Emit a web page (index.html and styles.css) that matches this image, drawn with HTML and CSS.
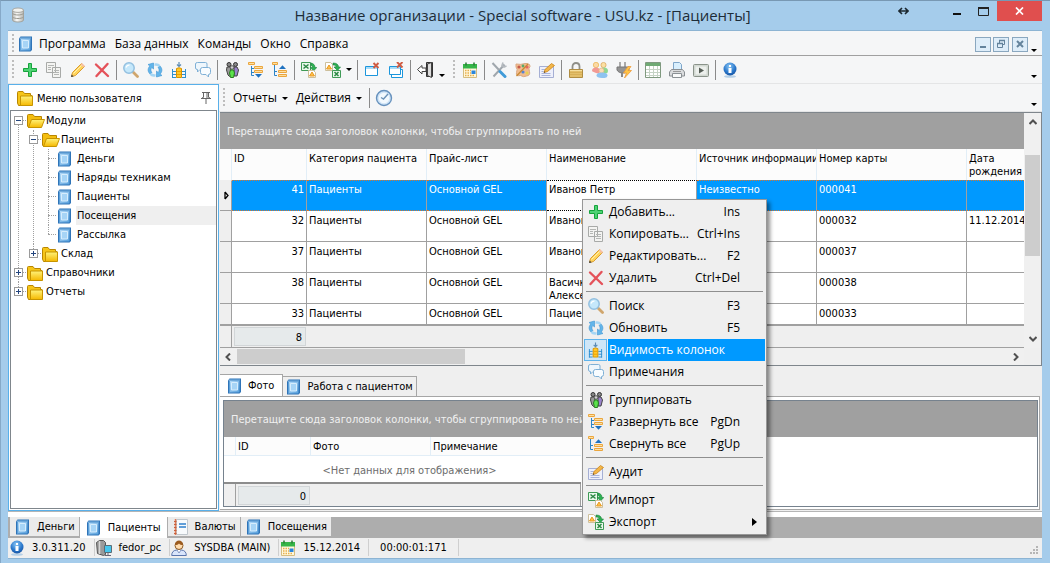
FILE: index.html
```html
<!DOCTYPE html>
<html lang="ru">
<head>
<meta charset="utf-8">
<title>Название организации - Special software - USU.kz - [Пациенты]</title>
<link rel="stylesheet" href="styles.css">
</head>
<body>
<svg class="sprite" width="0" height="0" aria-hidden="true">
  <defs>
    <linearGradient id="g-blue" x1="0" y1="0" x2="1" y2="1"><stop offset="0" stop-color="#b9defa"/><stop offset="1" stop-color="#559edb"/></linearGradient>
    <linearGradient id="g-gold" x1="0" y1="0" x2="0" y2="1"><stop offset="0" stop-color="#fff27a"/><stop offset="1" stop-color="#f5b800"/></linearGradient>
    <linearGradient id="g-grey" x1="0" y1="0" x2="1" y2="0"><stop offset="0" stop-color="#b5b5b0"/><stop offset=".4" stop-color="#fafaf8"/><stop offset="1" stop-color="#b5b5b0"/></linearGradient>
    <radialGradient id="g-ball" cx=".45" cy=".3" r=".75"><stop offset="0" stop-color="#8cc8f5"/><stop offset=".6" stop-color="#2a78cc"/><stop offset="1" stop-color="#174f9c"/></radialGradient>
  </defs>
  <symbol id="i-book" viewBox="0 0 16 16"><path d="M1 2.500L2.500.500H14v13.500L12.500 15.500H1z" fill="#2f74b8"/><path d="M2 2.500h10.500v12H2z" fill="url(#g-blue)"/><path d="M4.500 4.500h6v7.500h-6z" fill="#a6d4f6" stroke="#d6edfd"/><path d="M2 2h11" stroke="#7db6e4"/><path d="M2.500 3v11" stroke="#5b9fd8"/></symbol>
  <symbol id="i-db" viewBox="0 0 16 16"><path d="M2.500 3v10c0 1.200 2.500 2 5.500 2s5.500-.8 5.500-2V3z" fill="url(#g-grey)" stroke="#a3a39d"/><ellipse cx="8" cy="3.200" rx="5.500" ry="2.200" fill="#f2f2ee" stroke="#aaa9a3"/><path d="M2.500 6.500c2 2 9 2 11 0M2.500 10c2 2 9 2 11 0" fill="none" stroke="#99988f"/></symbol>
  <symbol id="i-add" viewBox="0 0 16 16"><path d="M6.500 1.500h3v5h5v3h-5v5h-3v-5h-5v-3h5z" fill="#4ed274" stroke="#16a33c" stroke-linejoin="round"/></symbol>
  <symbol id="i-copy" viewBox="0 0 16 16"><path d="M.5.500h9v10h-9zM6.500 5.500h8v10h-8z" fill="#f4f4f2" stroke="#a8aaa8"/><path d="M2 3.500h6M2 5.500h3M2 7.500h3M8 8.500h5M8 10.500h5M8 12.500h5" stroke="#b4b6b4"/></symbol>
  <symbol id="i-edit" viewBox="0 0 16 16"><path d="M1.500 14.500l1-4L11.500 1.500l3 3-9 9z" fill="#ffd45c" stroke="#d99c30"/><path d="M3.500 11.500l8.500-8.500" stroke="#fff1b0"/><path d="M10.500 2.500l1.500-1.500 3 3-1.500 1.500z" fill="#f6bfa0"/><path d="M1 15l.6-2.500 2 2z" fill="#444"/></symbol>
  <symbol id="i-del" viewBox="0 0 16 16"><path d="M2 2.500L14 14M13.500 2L2.500 14" stroke="#e4525a" stroke-width="2.400" stroke-linecap="round"/></symbol>
  <symbol id="i-search" viewBox="0 0 16 16"><path d="M10 10l4.500 4.500" stroke="#d0a66d" stroke-width="2.800" stroke-linecap="round"/><circle cx="6" cy="6" r="5.200" fill="#c5e8fb" stroke="#93c0e0" stroke-width="1.500"/><path d="M3 5.500c.5-1.500 2-2.500 3.500-2.300" stroke="#fff" fill="none" stroke-width="1.300"/></symbol>
  <symbol id="i-refresh" viewBox="0 0 16 16"><path d="M1 2.500L6.500 1v6L4.800 5.500C3.500 7 3.500 9 5 10.500L3 12C.5 9.500.5 6.500 2.800 4z" fill="#62b5ea" stroke="#3d94d3" stroke-width=".6"/><path d="M15 13.500L9.500 15V9l1.700 1.500C12.500 9 12.500 7 11 5.500L13 4c2.500 2.500 2.500 5.500.2 8z" fill="#62b5ea" stroke="#3d94d3" stroke-width=".6"/><path d="M7.500 1.500C10 .8 12 1.500 13.500 3.500L11.500 5c-1-1-2.500-1.500-4-1zM8.500 14.500C6 15.200 4 14.500 2.500 12.500l2-1.500c1 1 2.500 1.500 4 1z" fill="#a5d6f4"/></symbol>
  <symbol id="i-cols" viewBox="0 0 16 16"><path d="M8 0v4M6 2.500l2 2 2-2" fill="none" stroke="#5b8bb5" stroke-width="1.200"/><path d="M1.500 7v9M14.500 7v9M1 9.500h4M1 12.500h4M1 15.500h4M11 9.500h4M11 12.500h4M11 15.500h4" stroke="#2f8fcf"/><path d="M5.500 6.500q2.500-1.500 5 0v9h-5z" fill="#ffc928" stroke="#d79200"/><path d="M6 9.500h4M6 12.500h4" stroke="#f09d00"/></symbol>
  <symbol id="i-chat" viewBox="0 0 16 16"><path d="M2.500.500h8q1.500 0 1.500 1.500v4q0 1.500-1.500 1.500H5L2.500 10V7.500Q.5 7.500.5 6V2Q.5.500 2.500.500z" fill="#eef6fc" stroke="#7fb0d6"/><path d="M7.500 5.500h6q2 0 2 2v3q0 2-2 2v2.500l-2.500-2.500H7.500q-2 0-2-2v-3q0-2 2-2z" fill="#f8fcff" stroke="#7fb0d6"/></symbol>
  <symbol id="i-group" viewBox="0 0 16 16"><circle cx="5" cy="2.500" r="2" fill="#888" stroke="#333"/><circle cx="11.500" cy="2.500" r="2" fill="#888" stroke="#333"/><path d="M3 5h3.500l1 8-2 1.500L4 13 2.500 8z" fill="#999" stroke="#444"/><path d="M10 5h3l1.500 3-1.500 6h-3z" fill="#9a83cc" stroke="#444"/><circle cx="8" cy="5.500" r="1.800" fill="#d0d0d0" stroke="#555"/><path d="M6.500 8h3l1 3-1 4.500h-3L5.500 11z" fill="#5be24b" stroke="#2b7b23"/></symbol>
  <symbol id="i-expand" viewBox="0 0 16 16"><path d="M3.500 4v9.500H6M3.500 6.500H6M3.500 10.500H6" fill="none" stroke="#2d84c6"/><path d="M.5.500h6v2h-6zM6.500 4.500h8v2h-8zM6.500 8.500h8v2h-8z" fill="#ffe0a0" stroke="#eaa63f"/><path d="M7 12h7l-3.500 3.800z" fill="#1f72c0"/></symbol>
  <symbol id="i-collapse" viewBox="0 0 16 16"><path d="M2.500 3v10.500H5M2.500 9.500H5" fill="none" stroke="#2d84c6"/><path d="M.5.500h5v2h-5zM6.500 8.500h8v2h-8zM6.500 12.500h8v2h-8z" fill="#ffe0a0" stroke="#eaa63f"/><path d="M7 7h7l-3.500-3.800z" fill="#1f72c0"/></symbol>
  <symbol id="i-import" viewBox="0 0 16 16"><path d="M.5.500h9v8h-9z" fill="#e9f8ec" stroke="#3f9a56"/><path d="M2.500 2.500l5 4M7.500 2.500l-5 4" stroke="#2b8743" stroke-width="1.500"/><path d="M10 1c2.500.5 4 2 4 4.500h1.800L12.500 9 9.500 5.500h2c0-1.200-.5-1.700-1.500-2z" fill="#2db052" stroke="#17803a" stroke-width=".6"/><path d="M7.500 8.500h5l2 2v5h-7z" fill="#fff" stroke="#cdbf9c"/><path d="M8.500 14l2.500-4 2.500 4z" fill="#ffc04a" stroke="#e89a22"/></symbol>
  <symbol id="i-export" viewBox="0 0 16 16"><path d="M.5.500h5l2 2v6h-7z" fill="#fff" stroke="#cdbf9c"/><path d="M1.500 7L4 3l2.500 4z" fill="#ffc04a" stroke="#e89a22"/><path d="M8 1c3.500 0 5.500 1.500 5.500 4h2L12.500 8.500 9 5h2c0-1.500-1-2-3-2z" fill="#2db052" stroke="#17803a" stroke-width=".6"/><path d="M7.500 8.500h8v7h-8z" fill="#e9f8ec" stroke="#3f9a56"/><path d="M9.500 10l4 4M13.500 10l-4 4" stroke="#2b8743" stroke-width="1.500"/></symbol>
  <symbol id="i-winx" viewBox="0 0 16 16"><path d="M1.500 4.500h12v9h-12z" fill="#fff" stroke="#1c96dc"/><path d="M2 6h11" stroke="#a9dcf8" stroke-width="2"/><path d="M9.500 1l5 5M14.500 1l-5 5" stroke="#cf5b42" stroke-width="1.900"/></symbol>
  <symbol id="i-winsx" viewBox="0 0 16 16"><path d="M3.500 8v7.500h11V7.500h-2" fill="#fff" stroke="#1c96dc"/><path d="M1.500 4.500h11v8h-11z" fill="#fff" stroke="#1c96dc"/><path d="M2 6h10" stroke="#a9dcf8" stroke-width="2"/><path d="M9 0l5.500 5.500M14.500 0L9 5.500" stroke="#cf5b42" stroke-width="1.900"/></symbol>
  <symbol id="i-exit" viewBox="0 0 16 16"><path d="M9.500.500h6v14h-6z" fill="#999" stroke="#333"/><path d="M10.500 2l4-1.500v15l-4-2z" fill="#ddd" stroke="#444"/><path d="M.5 7.500L5 3.500v2.500h4v3.500H5V12z" fill="#fff" stroke="#444"/></symbol>
  <symbol id="i-cal" viewBox="0 0 16 16"><path d="M1.500 2.500h13v13h-13z" fill="#fff8dc" stroke="#d5bd80"/><path d="M1 2h14v4.500H1z" fill="#35b548"/><path d="M4 .5v3M12 .5v3" stroke="#2b7b37" stroke-width="1.500"/><path d="M3 8.500h6M3 11h6M3 13.500h10" stroke="#e7ae4e" stroke-width="1.500" stroke-dasharray="1.500 1"/><path d="M9.500 8.500h4v3.500h-4z" fill="#2a86dd"/></symbol>
  <symbol id="i-tools" viewBox="0 0 16 16"><path d="M1.500 1l7 7.500M13.500 2.500l-11 12" stroke="#a0a7ad" stroke-width="2"/><path d="M12 .5l-1 3 2 1.500 2.500-1" stroke="#b5babf" stroke-width="1.600" fill="none"/><path d="M9 9.500l5 5" stroke="#419bd8" stroke-width="3" stroke-linecap="round"/></symbol>
  <symbol id="i-palette" viewBox="0 0 16 16"><path d="M1 2q5 1 9-.5 5-.5 5 3-2 2-.5 5 1 4-3 4.500-3 1.500-6-.5-5 1-4-3Q3 7 1 5z" fill="#f2bd90" stroke="#dba880"/><circle cx="4" cy="5" r="1.600" fill="#c55a47"/><circle cx="8" cy="4" r="1.400" fill="#58ab6b"/><circle cx="12" cy="5" r="1.600" fill="#e86464"/><circle cx="8" cy="10" r="1.600" fill="#5584d6"/><circle cx="12" cy="11" r="1.500" fill="#e6d250"/><path d="M1.500 14L13 2" stroke="#c78a35" stroke-width="1.300"/></symbol>
  <symbol id="i-audit" viewBox="0 0 16 16"><path d="M.5 4.500h14v11H.5z" fill="#eef0fb" stroke="#a5afd4"/><path d="M2.500 7.500h4M2.500 9.500h2M2.500 11.500h9M2.500 13.500h9" stroke="#a9b4da"/><path d="M5 10.500l1-3L12.500 1.500l3 2-7 6z" fill="#f3b649" stroke="#c98418" stroke-width=".8"/><path d="M4.800 10.700l1.500-.5-1-1z" fill="#333"/></symbol>
  <symbol id="i-lock" viewBox="0 0 16 16"><path d="M4.500 8V4.500C4.500 2.500 6 1 8 1s3.500 1.500 3.500 3.500V8" fill="none" stroke="#8f8f88" stroke-width="1.800"/><path d="M1.500 7.500h13v8h-13z" fill="#e3bf6b" stroke="#b08d42"/><path d="M2 8.500h12" stroke="#f5dfa0"/><path d="M2 10.500h12M2 12.500h12" stroke="#d2a94f" stroke-width=".7"/></symbol>
  <symbol id="i-users" viewBox="0 0 16 16"><circle cx="4" cy="3" r="2.700" fill="#fbd9a4" stroke="#e8b34e" stroke-width=".7"/><path d="M0 9q0-3.500 4-3.500T8 9t-4 2-4-2z" fill="#f19a94"/><circle cx="11.500" cy="3" r="2.600" fill="#fbe0a4" stroke="#d9a052" stroke-width=".7"/><path d="M8 8q0-2.500 4-2.500T16 9t-4 2-4-3z" fill="#90d891"/><circle cx="9.500" cy="8.500" r="2.500" fill="#fbdcb4" stroke="#e2b482" stroke-width=".7"/><path d="M4.500 13.500q0-3 5.500-3t5.500 3-5.500 2.500-5.500-2.500z" fill="#8ec3f0"/></symbol>
  <symbol id="i-plug" viewBox="0 0 16 16"><path d="M4 0v5M9 0v5" stroke="#aaa" stroke-width="2"/><path d="M1 5h12v3c-1 2-3 3-6 3S2 10 1 8z" fill="#949494" stroke="#777"/><path d="M6 11v4" stroke="#888" stroke-width="2"/><path d="M12 4.500L7.500 11h3l-2 5 7-7.500H12l3-4z" fill="#ffc545" stroke="#ef9a3a" stroke-width=".8"/></symbol>
  <symbol id="i-table" viewBox="0 0 16 16"><path d="M.5.500h15v15H.5z" fill="#fff" stroke="#7f997f"/><path d="M1 1h14v3H1z" fill="#6faa74"/><path d="M1 7.500h14M1 10.500h14M1 13.500h14M4.500 4v11M8.500 4v11M12.500 4v11" stroke="#c5d3c5"/></symbol>
  <symbol id="i-print" viewBox="0 0 16 16"><path d="M4.500.5h6l2 2v6h-8z" fill="#d9effd" stroke="#7fa6c9"/><path d="M2.500 7.500h11l2 2.500v4H.5v-4z" fill="#dadcde" stroke="#8a8f93"/><path d="M3.500 11.500h9v4h-9z" fill="#f9fafa" stroke="#8b9195"/><path d="M4 9.500h8" stroke="#999"/></symbol>
  <symbol id="i-play" viewBox="0 0 16 16"><rect x=".5" y="2.500" width="15" height="12" rx="1" fill="#d2d8d2" stroke="#8a938a"/><path d="M2.500 4.500h11v8h-11z" fill="#edf0ed"/><path d="M6 5.500v6l5-3z" fill="#555d56"/></symbol>
  <symbol id="i-info" viewBox="0 0 16 16"><ellipse cx="8" cy="14.500" rx="6" ry="1.300" fill="#b5cfe6"/><circle cx="8" cy="7" r="6.500" fill="url(#g-ball)"/><path d="M7 3h2v2H7zM6.500 6h3v5h-3z" fill="#fff"/></symbol>
  <symbol id="i-clock" viewBox="0 0 18 18"><circle cx="9" cy="9" r="7.500" fill="#cfe4f7" stroke="#6691bd" stroke-width="1.400"/><circle cx="9" cy="9" r="5.300" fill="#f2f9fe"/><path d="M13 5L8.500 10 6 8.500" fill="none" stroke="#6c93b8" stroke-width="1.400"/></symbol>
  <symbol id="i-folder" viewBox="0 0 16 16"><path d="M.5 2.500q0-1 1-1H6l1.500 2h6v2H15v9L3 15.500H1.500L.5 13z" fill="#f6c518" stroke="#b98600"/><path d="M3.500 6h12v9.500h-12z" fill="url(#g-gold)" stroke="#c79400"/></symbol>
  <symbol id="i-folder-open" viewBox="0 0 18 16"><path d="M.5 2.500q0-1 1-1H6l1.500 2h7v3L13 14.500H1.500L.5 13z" fill="#f4be10" stroke="#b98600"/><path d="M4.500 6.500h13L14.500 14.500H1.500z" fill="url(#g-gold)" stroke="#c79400"/></symbol>
  <symbol id="i-pin" viewBox="0 0 12 14"><path d="M2 1.500h8M3.500 2v4.500M8.500 2v4.500M7 2v5M1 7.500h10M3.500 6L1.500 7.500M8.500 6l2 1.500M6 8v5" stroke="#666" fill="none"/></symbol>
  <symbol id="i-ruled" viewBox="0 0 16 16"><path d="M3.500.500h11v15h-11z" fill="#f7fafc" stroke="#c0c7cd"/><path d="M2.500 0v16" stroke="#e07a55" stroke-width="1.500"/><path d="M1 2.500h2.500M1 5.500h2.500M1 8.500h2.500M1 11.500h2.500M1 14.500h2.500" stroke="#c8603c"/><path d="M6 5h7M6 8h7" stroke="#2f80cc" stroke-width="1.500"/></symbol>
  <symbol id="i-server" viewBox="0 0 16 16"><path d="M.5 2.500l3-2h4l2 2v12l-2 1-6-2z" fill="#9a9a9a" stroke="#555"/><path d="M3.500 1v13" stroke="#d5d5d5" stroke-width="1.500"/><path d="M8.500 5.500h7v7h-7z" fill="#45c5ec" stroke="#5b6d77"/><path d="M12 13v2M9 15.500h6" stroke="#667"/></symbol>
  <symbol id="i-user" viewBox="0 0 16 16"><path d="M.7 15.500q0-5 5-5.500h4.600q5 .5 5 5.500z" fill="#d9e5fb" stroke="#5c76ad"/><circle cx="8" cy="5.500" r="4" fill="#ffdcae" stroke="#8d5b25"/><path d="M4 5c0-6 8-6 8 0-2 0-3-.5-4-1.500C7 4.500 6 5 4 5z" fill="#9b5b1f"/><path d="M6 10l2 3 2-3" fill="#fff" stroke="#5c76ad" stroke-width=".7"/></symbol>
  <symbol id="i-down" viewBox="0 0 6 3"><path d="M0 0h6L3 3z" fill="#000"/></symbol>
  <symbol id="i-right" viewBox="0 0 5 8"><path d="M0 0v8l5-4z" fill="#000"/></symbol>
  <symbol id="i-chev" viewBox="0 0 8 8"><path d="M6 .500L2.500 4 6 7.500" fill="none" stroke="#505050" stroke-width="2"/></symbol>
</svg>

<div class="window">
  <header class="titlebar">
    <svg class="ic title-icon"><use href="#i-db"/></svg>
    <h1 class="title">Название организации - Special software - USU.kz - [Пациенты]</h1>
    <div class="win-buttons">
      <button class="win-btn wide" aria-label="Растянуть"><svg width="11" height="8" viewBox="0 0 11 8"><path d="M1 4h9M4 1L1 4l3 3M7 1l3 3-3 3" fill="none" stroke="#1c2830" stroke-width="1.600"/></svg></button>
      <button class="win-btn" aria-label="Свернуть"><svg width="10" height="10" viewBox="0 0 10 10"><path d="M1 8h8" stroke="#111" stroke-width="2"/></svg></button>
      <button class="win-btn" aria-label="Развернуть"><svg width="11" height="9" viewBox="0 0 11 9"><path d="M.5 1h10v7.500H.5z" fill="none" stroke="#222"/><path d="M0 1h11" stroke="#222" stroke-width="2"/></svg></button>
      <button class="win-btn close" aria-label="Закрыть"><svg width="9" height="8" viewBox="0 0 9 8"><path d="M1 .5l7 7M8 .5l-7 7" stroke="#fff" stroke-width="1.700"/></svg></button>
    </div>
  </header>

  <div class="client">
    <nav class="menubar" aria-label="Главное меню">
      <span class="grip"></span>
      <svg class="ic book"><use href="#i-book"/></svg>
      <button class="menu-btn">Программа</button>
      <button class="menu-btn">База данных</button>
      <button class="menu-btn">Команды</button>
      <button class="menu-btn">Окно</button>
      <button class="menu-btn">Справка</button>
      <div class="mdi-buttons">
        <button class="mdi-btn" aria-label="Свернуть окно"><svg width="10" height="10" viewBox="0 0 10 10"><path d="M2 8h6" stroke="#64839c" stroke-width="2"/></svg></button>
        <button class="mdi-btn" aria-label="Восстановить окно"><svg width="10" height="10" viewBox="0 0 10 10"><path d="M3.500 4V1.500h5v4H6.500M1.500 4.500h5v4h-5z" fill="none" stroke="#64839c"/><path d="M3 1.500h6M1 4.500h6" stroke="#64839c" stroke-width="1.600"/></svg></button>
        <button class="mdi-btn gap" aria-label="Закрыть окно"><svg width="10" height="10" viewBox="0 0 10 10"><path d="M2 2l6 6M8 2L2 8" stroke="#64839c" stroke-width="2"/></svg></button>
      </div>
      <button class="more" aria-label="Ещё"><svg><use href="#i-down"/></svg></button>
    </nav>

    <div class="toolbar" role="toolbar" aria-label="Команды">
      <span class="grip"></span>
      <button class="tool" aria-label="Добавить"><svg class="ic"><use href="#i-add"/></svg></button>
      <button class="tool" aria-label="Копировать"><svg class="ic"><use href="#i-copy"/></svg></button>
      <button class="tool" aria-label="Редактировать"><svg class="ic"><use href="#i-edit"/></svg></button>
      <button class="tool" aria-label="Удалить"><svg class="ic"><use href="#i-del"/></svg></button>
      <span class="sep"></span>
      <button class="tool" aria-label="Поиск"><svg class="ic"><use href="#i-search"/></svg></button>
      <button class="tool" aria-label="Обновить"><svg class="ic"><use href="#i-refresh"/></svg></button>
      <button class="tool" aria-label="Видимость колонок"><svg class="ic"><use href="#i-cols"/></svg></button>
      <button class="tool" aria-label="Примечания"><svg class="ic"><use href="#i-chat"/></svg></button>
      <span class="sep"></span>
      <button class="tool" aria-label="Группировать"><svg class="ic"><use href="#i-group"/></svg></button>
      <button class="tool" aria-label="Развернуть все"><svg class="ic"><use href="#i-expand"/></svg></button>
      <button class="tool" aria-label="Свернуть все"><svg class="ic"><use href="#i-collapse"/></svg></button>
      <span class="sep"></span>
      <button class="tool" aria-label="Импорт"><svg class="ic"><use href="#i-import"/></svg></button>
      <button class="tool" aria-label="Экспорт"><svg class="ic"><use href="#i-export"/></svg></button>
      <button class="drop" aria-label="Варианты экспорта"><svg><use href="#i-down"/></svg></button>
      <span class="sep"></span>
      <button class="tool" aria-label="Закрыть вкладку"><svg class="ic"><use href="#i-winx"/></svg></button>
      <button class="tool" aria-label="Закрыть все вкладки"><svg class="ic"><use href="#i-winsx"/></svg></button>
      <span class="sep"></span>
      <button class="tool" aria-label="Выход"><svg class="ic"><use href="#i-exit"/></svg></button>
      <button class="drop low" aria-label="Ещё команды"><svg><use href="#i-down"/></svg></button>
      <span class="grip inner"></span>
      <button class="tool" aria-label="Календарь"><svg class="ic"><use href="#i-cal"/></svg></button>
      <span class="sep"></span>
      <button class="tool" aria-label="Настройки"><svg class="ic"><use href="#i-tools"/></svg></button>
      <button class="tool" aria-label="Оформление"><svg class="ic"><use href="#i-palette"/></svg></button>
      <button class="tool" aria-label="Аудит"><svg class="ic"><use href="#i-audit"/></svg></button>
      <span class="sep"></span>
      <button class="tool" aria-label="Блокировка"><svg class="ic"><use href="#i-lock"/></svg></button>
      <button class="tool" aria-label="Пользователи"><svg class="ic"><use href="#i-users"/></svg></button>
      <button class="tool" aria-label="Подключение"><svg class="ic"><use href="#i-plug"/></svg></button>
      <span class="sep"></span>
      <button class="tool" aria-label="Таблица"><svg class="ic"><use href="#i-table"/></svg></button>
      <button class="tool" aria-label="Печать"><svg class="ic"><use href="#i-print"/></svg></button>
      <button class="tool" aria-label="Запуск"><svg class="ic"><use href="#i-play"/></svg></button>
      <span class="sep"></span>
      <button class="tool" aria-label="О программе"><svg class="ic"><use href="#i-info"/></svg></button>
      <button class="more" aria-label="Ещё"><svg><use href="#i-down"/></svg></button>
    </div>

    <div class="workspace">
      <aside class="side">
        <div class="side-head">
          <svg class="ic"><use href="#i-folder"/></svg>
          <h2 class="side-title">Меню пользователя</h2>
          <button class="pin" aria-label="Закрепить"><svg><use href="#i-pin"/></svg></button>
        </div>
        <ul class="tree">
          <li class="node"><div class="row"><button class="toggle minus" aria-label="Свернуть Модули"></button><svg class="ic open"><use href="#i-folder-open"/></svg><span>Модули</span></div>
            <ul>
              <li class="node"><div class="row"><button class="toggle minus" aria-label="Свернуть Пациенты"></button><svg class="ic open"><use href="#i-folder-open"/></svg><span>Пациенты</span></div>
                <ul>
                  <li class="node leaf"><a class="row" href="#money"><svg class="ic"><use href="#i-book"/></svg><span>Деньги</span></a></li>
                  <li class="node leaf"><a class="row" href="#orders"><svg class="ic"><use href="#i-book"/></svg><span>Наряды техникам</span></a></li>
                  <li class="node leaf"><a class="row" href="#patients"><svg class="ic"><use href="#i-book"/></svg><span>Пациенты</span></a></li>
                  <li class="node leaf"><a class="row selected" href="#visits"><svg class="ic"><use href="#i-book"/></svg><span>Посещения</span></a></li>
                  <li class="node leaf"><a class="row" href="#mailing"><svg class="ic"><use href="#i-book"/></svg><span>Рассылка</span></a></li>
                </ul>
              </li>
              <li class="node"><div class="row"><button class="toggle plus" aria-label="Развернуть Склад"></button><svg class="ic"><use href="#i-folder"/></svg><span>Склад</span></div></li>
            </ul>
          </li>
          <li class="node"><div class="row"><button class="toggle plus" aria-label="Развернуть Справочники"></button><svg class="ic"><use href="#i-folder"/></svg><span>Справочники</span></div></li>
          <li class="node"><div class="row"><button class="toggle plus" aria-label="Развернуть Отчеты"></button><svg class="ic"><use href="#i-folder"/></svg><span>Отчеты</span></div></li>
        </ul>
      </aside>

      <main class="doc">
        <div class="toolbar sub" role="toolbar" aria-label="Отчеты и действия">
          <span class="grip"></span>
          <button class="menu-btn">Отчеты <svg><use href="#i-down"/></svg></button>
          <button class="menu-btn">Действия <svg><use href="#i-down"/></svg></button>
          <span class="sep"></span>
          <button class="tool" aria-label="Время"><svg class="ic clock"><use href="#i-clock"/></svg></button>
          <button class="more" aria-label="Ещё"><svg><use href="#i-down"/></svg></button>
        </div>

        <section class="grid">
          <div class="grid-view">
            <div class="group-bar">Перетащите сюда заголовок колонки, чтобы сгруппировать по ней</div>
            <table class="data">
              <colgroup><col class="c-mark"><col class="c-id"><col class="c-mid"><col class="c-mid"><col class="c-big"><col class="c-mid"><col class="c-big"><col></colgroup>
              <thead><tr><th></th><th>ID</th><th>Категория пациента</th><th>Прайс-лист</th><th>Наименование</th><th>Источник информации</th><th>Номер карты</th><th>Дата рождения</th></tr></thead>
              <tbody>
                <tr class="current"><td class="mark"><svg width="5" height="9" viewBox="0 0 5 9"><path d="M1 1v7M1 1l3 3.500L1 8" fill="none" stroke="#000" stroke-width="1.300"/></svg></td><td class="num">41</td><td>Пациенты</td><td>Основной GEL</td><td class="focus">Иванов Петр</td><td>Неизвестно</td><td>000041</td><td></td></tr>
                <tr><td class="mark"></td><td class="num">32</td><td>Пациенты</td><td>Основной GEL</td><td>Иванов</td><td></td><td>000032</td><td>11.12.2014</td></tr>
                <tr><td class="mark"></td><td class="num">37</td><td>Пациенты</td><td>Основной GEL</td><td>Иванов</td><td></td><td>000037</td><td></td></tr>
                <tr><td class="mark"></td><td class="num">38</td><td>Пациенты</td><td>Основной GEL</td><td>Васичкин<br>Алексей</td><td></td><td>000038</td><td></td></tr>
                <tr class="last"><td class="mark"></td><td class="num">33</td><td>Пациенты</td><td>Основной GEL</td><td>Пациент</td><td></td><td>000033</td><td></td></tr>
              </tbody>
              <tfoot><tr><td class="mark"></td><td><div class="total">8</div></td><td colspan="6"></td></tr></tfoot>
            </table>
          </div>
          <div class="vscroll" role="presentation"><svg class="chev up"><use href="#i-chev"/></svg><div class="thumb"></div><svg class="chev dn"><use href="#i-chev"/></svg></div>
          <div class="hscroll" role="presentation"><svg class="chev"><use href="#i-chev"/></svg><div class="thumb"></div><svg class="chev rt"><use href="#i-chev"/></svg></div>
        </section>

        <section class="detail">
          <div class="tabs" role="tablist">
            <button class="tab active" role="tab" aria-selected="true"><svg class="ic"><use href="#i-book"/></svg>Фото</button>
            <button class="tab" role="tab" aria-selected="false"><svg class="ic"><use href="#i-book"/></svg>Работа с пациентом</button>
          </div>
          <div class="tab-page">
            <div class="detail-grid">
              <div class="group-bar">Перетащите сюда заголовок колонки, чтобы сгруппировать по ней</div>
              <table class="data small">
                <colgroup><col class="c-mark"><col class="c-id"><col class="c-mid"><col class="c-big"></colgroup>
                <thead><tr><th></th><th>ID</th><th>Фото</th><th>Примечание</th></tr></thead>
                <tbody><tr><td></td><td class="empty" colspan="3">&lt;Нет данных для отображения&gt;</td></tr></tbody>
                <tfoot><tr><td class="mark"></td><td><div class="total">0</div></td><td colspan="2"></td></tr></tfoot>
              </table>
            </div>
          </div>
        </section>
      </main>
    </div>

    <div class="doc-tabs" role="tablist">
      <button class="doc-tab" role="tab"><svg class="ic"><use href="#i-book"/></svg>Деньги</button>
      <button class="doc-tab active" role="tab" aria-selected="true"><svg class="ic"><use href="#i-book"/></svg>Пациенты</button>
      <button class="doc-tab" role="tab"><svg class="ic"><use href="#i-ruled"/></svg>Валюты</button>
      <button class="doc-tab" role="tab"><svg class="ic"><use href="#i-book"/></svg>Посещения</button>
    </div>

    <footer class="status">
      <span class="cell"><svg class="ic"><use href="#i-info"/></svg>3.0.311.20</span>
      <span class="cell"><svg class="ic"><use href="#i-server"/></svg>fedor_pc</span>
      <span class="cell"><svg class="ic"><use href="#i-user"/></svg>SYSDBA (MAIN)</span>
      <span class="cell"><svg class="ic"><use href="#i-cal"/></svg>15.12.2014</span>
      <span class="cell plain">00:00:01:171</span>
      <svg class="resize" width="9" height="9" viewBox="0 0 9 9"><path d="M6 0h2v2H6zM3 3h2v2H3zM6 3h2v2H6zM0 6h2v2H0zM3 6h2v2H3zM6 6h2v2H6z" fill="#b5b5b5"/></svg>
    </footer>
  </div>

  <div class="context" role="menu">
    <button class="item" role="menuitem"><svg class="ic"><use href="#i-add"/></svg><span>Добавить...</span><kbd>Ins</kbd></button>
    <button class="item" role="menuitem"><svg class="ic"><use href="#i-copy"/></svg><span>Копировать...</span><kbd>Ctrl+Ins</kbd></button>
    <button class="item" role="menuitem"><svg class="ic"><use href="#i-edit"/></svg><span>Редактировать...</span><kbd>F2</kbd></button>
    <button class="item" role="menuitem"><svg class="ic"><use href="#i-del"/></svg><span>Удалить</span><kbd>Ctrl+Del</kbd></button>
    <hr>
    <button class="item" role="menuitem"><svg class="ic"><use href="#i-search"/></svg><span>Поиск</span><kbd>F3</kbd></button>
    <button class="item" role="menuitem"><svg class="ic"><use href="#i-refresh"/></svg><span>Обновить</span><kbd>F5</kbd></button>
    <button class="item hot" role="menuitem"><svg class="ic"><use href="#i-cols"/></svg><span>Видимость колонок</span></button>
    <button class="item" role="menuitem"><svg class="ic"><use href="#i-chat"/></svg><span>Примечания</span></button>
    <hr>
    <button class="item" role="menuitem"><svg class="ic"><use href="#i-group"/></svg><span>Группировать</span></button>
    <button class="item" role="menuitem"><svg class="ic"><use href="#i-expand"/></svg><span>Развернуть все</span><kbd>PgDn</kbd></button>
    <button class="item" role="menuitem"><svg class="ic"><use href="#i-collapse"/></svg><span>Свернуть все</span><kbd>PgUp</kbd></button>
    <hr>
    <button class="item" role="menuitem"><svg class="ic"><use href="#i-audit"/></svg><span>Аудит</span></button>
    <hr>
    <button class="item" role="menuitem"><svg class="ic"><use href="#i-import"/></svg><span>Импорт</span></button>
    <button class="item" role="menuitem"><svg class="ic"><use href="#i-export"/></svg><span>Экспорт</span><svg class="sub-arrow"><use href="#i-right"/></svg></button>
  </div>
</div>
</body>
</html>
```

FILE: styles.css
```css
* { box-sizing: border-box; }

body {
  margin: 0;
  font: 11px/13px "DejaVu Sans Condensed", "DejaVu Sans", sans-serif;
  color: #000;
  background: #a5cceb;
}

button {
  margin: 0;
  padding: 0;
  border: 0;
  background: none;
  color: inherit;
  font: inherit;
  display: flex;
  align-items: center;
}

h1, h2 { margin: 0; font-weight: normal; }
ul { margin: 0; padding: 0; list-style: none; }
a { color: inherit; text-decoration: none; }

.sprite { position: absolute; }
.ic { width: 16px; height: 16px; flex: none; }

.window {
  position: relative;
  min-height: 100vh;
  display: flex;
  flex-direction: column;
  padding: 0 8px 6px 7px;
  border-top: 1px solid #7898b3;
  border-left: 1px solid #86a9c8;
  background: #a5cceb;
}

/* Title bar */
.titlebar { display: flex; height: 29px; }
.title-icon { margin: 6px 0 0 2px; }
.title {
  flex: 1;
  padding: 4px 0 0 134px;
  text-align: center;
  font: 15px/20px "Open Sans", "Noto Sans", sans-serif;
  color: #1d2c38;
}
.win-buttons { display: flex; align-items: flex-start; }
.win-btn { width: 27px; height: 20px; justify-content: center; }
.win-btn.wide { width: 36px; margin-right: 22px; }
.win-btn.close { width: 45px; background: #e04f4e; }

/* Client area */
.client {
  flex: 1;
  display: flex;
  flex-direction: column;
  border: 1px solid #8db4d3;
  border-width: 1px 0;
  background: #f5f6f7;
}

.grip {
  width: 2px;
  height: 20px;
  margin: 0 4px;
  background: repeating-linear-gradient(#bdbdbd 0 2px, transparent 2px 4px);
  flex: none;
}
.more, .drop { width: 10px; height: 20px; justify-content: center; }
.more { margin: 0 3px 0 auto; align-items: flex-end; padding-bottom: 2px; }
.more svg, .drop svg, .menu-btn svg { width: 6px; height: 3px; }
.drop { width: 8px; margin: 0 2px 0 0; }
.drop.low { align-items: flex-end; width: 10px; margin: 0; padding-bottom: 3px; }

.menubar {
  display: flex;
  align-items: center;
  height: 25px;
  padding-top: 2px;
  border-bottom: 1px solid #a0a0a0;
}
.book { margin: 0 5px 0 0; }
.menu-btn { font: 12px/16px "Open Sans", "Noto Sans", sans-serif; margin-right: 9px; gap: 5px; }
.mdi-buttons { display: flex; gap: 2px; margin-left: auto; }
.mdi-btn {
  width: 16px;
  height: 15px;
  justify-content: center;
  border: 1px solid #8aa7bf;
  background: #deedf9;
}
.mdi-btn.gap { margin-left: 1px; }
.mdi-buttons + .more { margin-left: 1px; }

.toolbar {
  display: flex;
  align-items: center;
  height: 28px;
  border-bottom: 1px solid #e4e5e6;
}
.tool { width: 24px; height: 24px; justify-content: center; }
.sep { width: 1px; height: 20px; margin: 0 2px; background: #8a8a8a; flex: none; }
.toolbar .inner { margin: 0 3px 0 6px; }

.workspace { flex: 1; display: flex; }

/* Side panel */
.side {
  width: 211px;
  flex: none;
  display: flex;
  flex-direction: column;
  border: 1px solid #59b0ea;
  padding: 1px;
  background: #fff;
}
.side-head {
  display: flex;
  align-items: center;
  height: 24px;
  padding: 0 5px 0 7px;
  gap: 4px;
}
.side-title { flex: 1; font-size: 11px; }
.pin svg { width: 12px; height: 14px; }
.tree { flex: 1; border: 1px solid #7f868c; background: #fff; }

.node { position: relative; }
.node .row { display: flex; align-items: center; height: 19px; padding-left: 3px; gap: 3px; }
.node .ic.open { width: 18px; margin-right: -2px; }
.node ul { margin-left: 15px; }
.toggle {
  position: relative;
  z-index: 1;
  width: 9px;
  height: 9px;
  margin-right: 1px;
  border: 1px solid #9a9a9a;
}
.toggle.minus {
  background: linear-gradient(#23457e, #23457e) 50% 50% / 5px 1px no-repeat #fff;
}
.toggle.plus {
  background:
    linear-gradient(#23457e, #23457e) 50% 50% / 5px 1px no-repeat,
    linear-gradient(#23457e, #23457e) 50% 50% / 1px 5px no-repeat #fff;
}
.node::before {
  content: "";
  position: absolute;
  left: 7px;
  top: 0;
  height: 100%;
  border-left: 1px dotted #a0a0a0;
}
.node:last-child::before { height: 9px; }
.tree > .node:first-child::before { top: 9px; }
.node::after {
  content: "";
  position: absolute;
  left: 7px;
  top: 9px;
  width: 8px;
  border-top: 1px dotted #a0a0a0;
}
.leaf .row { padding-left: 16px; }
.node .row span { flex: 1; line-height: 19px; }
.leaf .row span { padding-left: 1px; }
.selected span { background: #efefef; }

/* Document area */
.doc { flex: 1; min-width: 0; display: flex; flex-direction: column; background: #efefef; }
.sub { height: 28px; padding-top: 1px; background: #f5f6f7; }
.sub .grip { margin-right: 8px; }
.sub .menu-btn { margin-right: 8px; }
.sub .menu-btn + .sep { margin-left: -1px; }
.sub .clock { width: 18px; height: 18px; }

.grid {
  display: grid;
  grid-template: auto 17px / minmax(0, 1fr) 17px;
  border: 1px solid #7f868c;
  border-width: 1px 1px 1px 0;
  margin-left: 1px;
  background: #efefef;
}
.grid-view { overflow: hidden; }
.group-bar {
  height: 36px;
  padding: 12px 7px 11px;
  background: #a0a0a0;
  color: #f0f0f0;
  white-space: nowrap;
  overflow: hidden;
}

.data { width: 100%; table-layout: fixed; border-collapse: separate; border-spacing: 0; background: #fff; }
.c-mark { width: 12px; }
.c-id { width: 75px; }
.c-mid { width: 120px; }
.c-big { width: 150px; }
.data th {
  height: 31px;
  padding: 3px 0 0 2px;
  border-right: 1px solid #e2eef7;
  background: #fcfcfc;
  font-weight: normal;
  text-align: left;
  vertical-align: top;
}
.data th:not(:nth-child(2)):not(:nth-child(8)) { white-space: nowrap; overflow: hidden; }
.data td {
  height: 31px;
  padding: 3px 0 0 2px;
  border-right: 1px solid #a0a0a0;
  border-bottom: 1px solid #a0a0a0;
  vertical-align: top;
}
.data td:last-child, .data th:last-child { border-right: 0; }
.data .num { text-align: right; padding-right: 2px; }
.data .mark { background: #efefef; vertical-align: middle; padding: 0 4px; }
.data .mark svg { display: block; }
.current td { background: #0099ff; color: #fff; border-top: 1px dotted #d9762b; border-bottom: 1px dotted #d9762b; padding-top: 2px; }
.current .mark { border-top-color: #efefef; border-bottom: 1px solid #a0a0a0; }
.data .focus { background: #fff; color: #000; border-top: 1px dotted #000; border-bottom: 1px dotted #000; }
.data .last td { height: 22px; border-bottom: 2px solid #a0a0a0; }
.data tfoot td { height: 22px; padding: 1px; border-bottom: 1px solid #a0a0a0; background: #efefef; vertical-align: middle; border-right: 0; }
.data tfoot .mark { border-right: 1px solid #a0a0a0; }
.total {
  height: 19px;
  margin-left: 1px;
  padding: 3px 3px 0;
  border: 1px solid #d2d6d8;
  background: #e6eaeb;
  text-align: right;
}

.vscroll { display: flex; flex-direction: column; align-items: center; padding: 5px 0; background: #f0f0f0; }
.vscroll .thumb { width: 15px; height: 101px; margin-top: 29px; background: #cdcdcd; }
.chev { width: 8px; height: 8px; flex: none; }
.chev.up { transform: rotate(90deg); }
.chev.dn { transform: rotate(-90deg); margin-top: auto; }
.chev.rt { transform: rotate(180deg); margin-left: auto; }
.hscroll { display: flex; align-items: center; padding: 0 4px; background: #f0f0f0; }
.hscroll .thumb { width: 228px; height: 15px; margin-left: 5px; background: #cdcdcd; }

/* Detail tabs */
.detail { flex: 1; display: flex; flex-direction: column; padding: 8px 2px 1px 1px; }
.tabs { display: flex; align-items: flex-end; }
.tab {
  height: 20px;
  padding: 0 3px;
  gap: 5px;
  border: 1px solid #a6a6a6;
  border-bottom: 0;
  border-left: 0;
  background: #efefef;
}
.tab.active { height: 22px; padding: 0 8px 0 7px; background: #fff; }
.tab-page { flex: 1; display: flex; border: 1px solid #a6a6a6; border-left: 0; padding: 3px 1px 2px 3px; background: #fff; }
.detail-grid { flex: 1; border: 1px solid #76828e; background: #fff; min-width: 0; }
.small { width: 357px; }
.small th { height: 19px; border-bottom: 1px solid #e2eef7; }
.small tbody td { height: 28px; border: 0; border-bottom: 2px solid #8c8c8c; vertical-align: middle; }
.data .empty { text-align: center; color: #6d6d6d; }
.small tfoot td:last-child { border-right: 1px solid #a0a0a0; }
.detail-grid .small tfoot td { border-bottom: 0; }

/* Document tabs */
.doc-tabs {
  display: flex;
  height: 27px;
  padding: 6px 0 0 2px;
  align-items: flex-start;
  background: linear-gradient(#b5b5b5 0 1px, #fff 1px 6px, #adadad 6px);
}
.doc-tab {
  height: 19px;
  padding: 0 4px 0 5px;
  gap: 6px;
  background: #ebebeb;
  margin-right: 1px;
}
.doc-tab.active { height: 21px; background: #fff; padding: 0 6px; }

/* Status bar */
.status { display: flex; align-items: center; height: 20px; padding-bottom: 1px; background: #efefef; }
.cell {
  display: flex;
  align-items: center;
  height: 17px;
  padding: 0 8px 0 1px;
  gap: 7px;
  border-right: 1px solid #cfcfcf;
}
.cell.plain { padding: 0 11px; }
.resize { margin: 6px 3px 0 auto; }

/* Context menu */
.context {
  position: absolute;
  left: 581px;
  top: 198px;
  width: 185px;
  padding: 1px;
  border: 1px solid #979797;
  background: #efefef;
  box-shadow: 3px 3px 4px rgba(0, 0, 0, .45);
  font: 12px/16px "Open Sans", "Noto Sans", sans-serif;
}
.item { width: 100%; height: 22px; padding-left: 4px; }
.item span { flex: 1; align-self: stretch; padding-left: 5px; text-align: left; line-height: 22px; white-space: nowrap; }
.item kbd { font: inherit; margin-right: 25px; }
.item.hot { padding-left: 0; }
.item.hot .ic { width: 23px; height: 22px; padding: 2px 3px; border: 1px solid #5fb4ec; background: #cfe6f7; }
.item.hot span { margin-left: 1px; padding-left: 1px; background: #0099ff; color: #fff; }
.sub-arrow { width: 5px; height: 8px; margin-right: 8px; }
.context hr { height: 1px; margin: 2px 2px 3px; border: 0; background: #8f8f8f; }
```
